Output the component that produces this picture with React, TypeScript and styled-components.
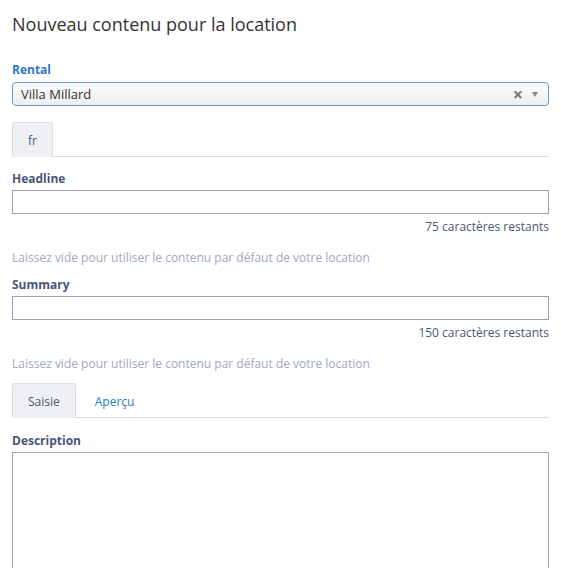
import React, { useState } from 'react';
import styled, { createGlobalStyle } from 'styled-components';

const GlobalStyle = createGlobalStyle`
  body {
    margin: 0;
    background: #fff;
    font-family: "Open Sans", "Liberation Sans", sans-serif;
  }
`;

function App() {
  const [lang] = useState('fr');
  const [mode, setMode] = useState<'edit' | 'preview'>('edit');
  const [headline, setHeadline] = useState('');
  const [summary, setSummary] = useState('');

  return (
    <Page>
      <GlobalStyle />
      <Title>Nouveau contenu pour la location</Title>

      <Label accent>Rental</Label>
      <Select>
        <SelectValue>Villa Millard</SelectValue>
        <Clear>×</Clear>
        <Caret />
      </Select>

      <Tabs>
        <Tab active>{lang}</Tab>
      </Tabs>

      <Label>Headline</Label>
      <Input value={headline} onChange={(e) => setHeadline(e.target.value)} />
      <Counter>{75 - headline.length} caractères restants</Counter>
      <Help>Laissez vide pour utiliser le contenu par défaut de votre location</Help>

      <Label>Summary</Label>
      <Input value={summary} onChange={(e) => setSummary(e.target.value)} />
      <Counter>{150 - summary.length} caractères restants</Counter>
      <Help>Laissez vide pour utiliser le contenu par défaut de votre location</Help>

      <Tabs spacing={15}>
        <Tab active={mode === 'edit'} onClick={() => setMode('edit')}>
          Saisie
        </Tab>
        <Tab active={mode === 'preview'} onClick={() => setMode('preview')}>
          Aperçu
        </Tab>
      </Tabs>

      <Label>Description</Label>
      <TextArea />
    </Page>
  );
}

interface LabelProps {
  readonly accent?: boolean;
}

interface TabsProps {
  readonly spacing?: number;
}

interface TabProps {
  readonly active?: boolean;
}

const Page = styled.div`
  display: flex;
  flex-direction: column;
  padding: 11px 12px 0;
`;

const Title = styled.h1`
  margin: 0 0 25px;
  font-size: 18px;
  font-weight: 400;
  line-height: 26px;
  color: #333;
`;

const Label = styled.label<LabelProps>`
  display: block;
  font-size: 12px;
  font-weight: 700;
  line-height: 16px;
  margin-bottom: 3px;
  color: ${({ accent }) => (accent ? '#2f78c4' : '#4a5578')};
`;

const Select = styled.div`
  display: flex;
  align-items: center;
  height: 24px;
  box-sizing: border-box;
  border: 1px solid #6f9ad8;
  border-radius: 4px;
  background: linear-gradient(#ffffff 0%, #f4f4f4 50%, #eeeeee 100%);
  padding: 0 8px;
  color: #333;
  font-size: 13px;
  margin-top: 1px;
  margin-bottom: 16px;
`;

const SelectValue = styled.span`
  flex: 1;
`;

const Clear = styled.span`
  font-size: 18px;
  font-weight: 700;
  color: #777;
  margin-right: 9px;
  line-height: 1;
`;

const Caret = styled.span`
  width: 0;
  height: 0;
  border-left: 3px solid transparent;
  border-right: 3px solid transparent;
  border-top: 5px solid #888;
  margin-right: 2px;
`;

const Tabs = styled.div<TabsProps>`
  display: flex;
  border-bottom: 1px solid #dcdee3;
  margin-bottom: ${({ spacing }) => spacing ?? 14}px;
`;

const Tab = styled.div<TabProps>`
  height: 35px;
  display: flex;
  align-items: center;
  padding: 0 15px;
  margin-right: 3px;
  margin-bottom: -1px;
  font-size: 12px;
  cursor: pointer;
  box-sizing: border-box;
  border: 1px solid ${({ active }) => (active ? '#dcdee3' : 'transparent')};
  border-bottom: none;
  border-radius: 2px 2px 0 0;
  background: ${({ active }) => (active ? '#eef0f5' : 'transparent')};
  color: ${({ active }) => (active ? '#4d5670' : '#1f7fc6')};
`;

const Input = styled.input`
  box-sizing: border-box;
  height: 24px;
  width: 100%;
  border: 1px solid #9aa0ba;
  border-radius: 0;
  outline: none;
  padding: 0 6px;
  font-size: 12px;
  font-family: inherit;
`;

const Counter = styled.div`
  text-align: right;
  font-size: 12px;
  line-height: 16px;
  color: #4d5670;
  margin-top: 5px;
`;

const Help = styled.div`
  font-size: 12px;
  line-height: 16px;
  color: #a2a8b8;
  margin: 15px 0 11px;
`;

const TextArea = styled.textarea`
  box-sizing: border-box;
  width: 100%;
  height: 180px;
  border: 1px solid #a2a5ac;
  border-radius: 0;
  outline: none;
  resize: none;
  font-family: inherit;
  font-size: 12px;
`;

export default App;
